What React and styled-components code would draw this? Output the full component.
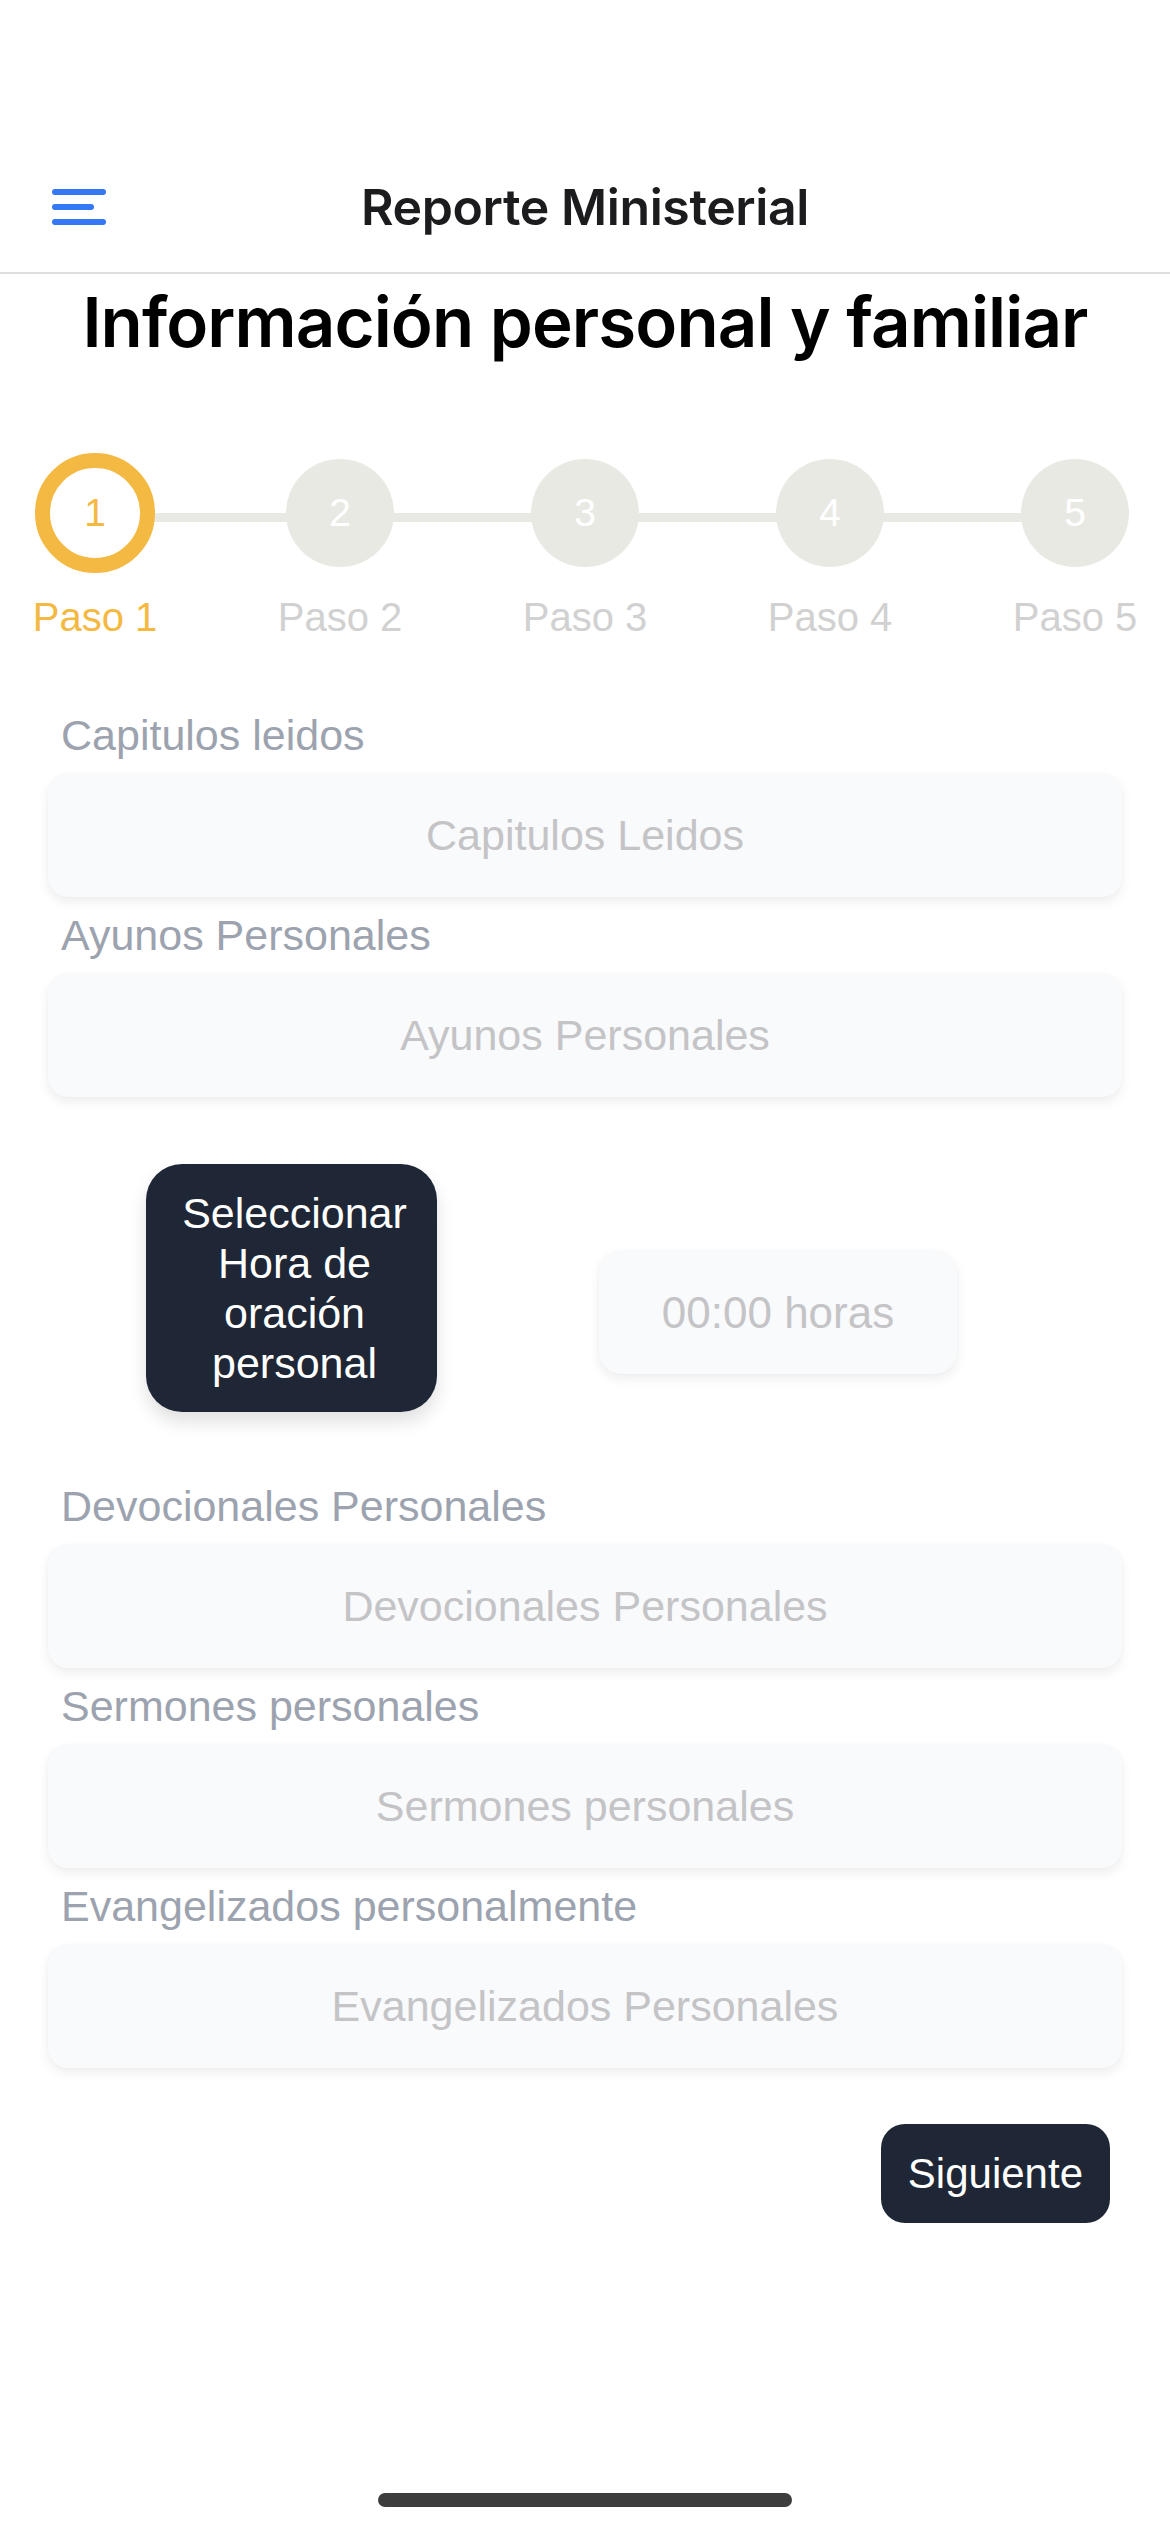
import styled, { createGlobalStyle } from "styled-components";

const GlobalStyle = createGlobalStyle`
  * {
    box-sizing: border-box;
  }
  body {
    margin: 0;
    background: #ffffff;
    font-family: "Liberation Sans", Arial, sans-serif;
  }
`;

const steps = [1, 2, 3, 4, 5];

const topFields = [
  { label: "Capitulos leidos", placeholder: "Capitulos Leidos" },
  { label: "Ayunos Personales", placeholder: "Ayunos Personales" },
];

const bottomFields = [
  { label: "Devocionales Personales", placeholder: "Devocionales Personales" },
  { label: "Sermones personales", placeholder: "Sermones personales" },
  { label: "Evangelizados personalmente", placeholder: "Evangelizados Personales" },
];

function MenuIcon() {
  return (
    <svg width="54" height="36" viewBox="0 0 54 36" fill="none">
      <g stroke="#3478f6" strokeWidth="6" strokeLinecap="round">
        <line x1="3" y1="3" x2="51" y2="3" />
        <line x1="3" y1="18" x2="39" y2="18" />
        <line x1="3" y1="33" x2="51" y2="33" />
      </g>
    </svg>
  );
}

function Field({ label, placeholder }) {
  return (
    <FieldGroup>
      <FieldLabel>{label}</FieldLabel>
      <FieldInput placeholder={placeholder} />
    </FieldGroup>
  );
}

export default function App() {
  const current = 1;

  return (
    <Page>
      <GlobalStyle />
      <StatusBar />
      <Header>
        <MenuButton>
          <MenuIcon />
        </MenuButton>
        <HeaderTitle>Reporte Ministerial</HeaderTitle>
        <span />
      </Header>

      <PageTitle>Información personal y familiar</PageTitle>

      <Stepper>
        <StepTrack />
        {steps.map((n) => (
          <Step key={n}>
            <CircleSlot>
              <StepCircle $active={n === current}>{n}</StepCircle>
            </CircleSlot>
            <StepLabel $active={n === current}>Paso {n}</StepLabel>
          </Step>
        ))}
      </Stepper>

      <Form>
        {topFields.map((f) => (
          <Field key={f.label} {...f} />
        ))}

        <TimeRow>
          <DarkButton>Seleccionar Hora de oración personal</DarkButton>
          <TimeBox>00:00 horas</TimeBox>
        </TimeRow>

        {bottomFields.map((f) => (
          <Field key={f.label} {...f} />
        ))}

        <Actions>
          <NextButton>Siguiente</NextButton>
        </Actions>
      </Form>

      <HomeIndicator />
    </Page>
  );
}

// page
const Page = styled.div`
  min-height: 100vh;
  display: flex;
  flex-direction: column;
  background: #ffffff;
`;

const StatusBar = styled.div`
  height: 141px;
`;

// header
const Header = styled.header`
  height: 133px;
  display: grid;
  grid-template-columns: 1fr auto 1fr;
  align-items: center;
  padding: 0 52px;
  border-bottom: 2px solid #dedede;
`;

const MenuButton = styled.div`
  display: flex;
  align-items: center;
`;

const HeaderTitle = styled.div`
  font-family: "Inter", "Liberation Sans", sans-serif;
  font-weight: 600;
  font-size: 50px;
  color: #1c1c1e;
  letter-spacing: -0.4px;
`;

// title
const PageTitle = styled.h1`
  margin: 6px 0 0;
  text-align: center;
  font-family: "Inter", "Liberation Sans", sans-serif;
  font-weight: 600;
  font-size: 69px;
  line-height: 84px;
  color: #000000;
  letter-spacing: -0.9px;
`;

// stepper
const Stepper = styled.div`
  position: relative;
  margin-top: 89px;
  padding: 0 35px;
  display: flex;
  justify-content: space-between;
`;

const StepTrack = styled.div`
  position: absolute;
  left: 95px;
  right: 95px;
  top: 60px;
  height: 9px;
  background: #e9e9e4;
`;

const Step = styled.div`
  position: relative;
  z-index: 1;
  width: 120px;
  display: flex;
  flex-direction: column;
  align-items: center;
`;

const CircleSlot = styled.div`
  width: 120px;
  height: 120px;
  display: flex;
  align-items: center;
  justify-content: center;
`;

const StepCircle = styled.div`
  width: ${(p) => (p.$active ? "120px" : "108px")};
  height: ${(p) => (p.$active ? "120px" : "108px")};
  border-radius: 50%;
  display: flex;
  align-items: center;
  justify-content: center;
  font-size: 39px;
  color: ${(p) => (p.$active ? "#f4b942" : "#ffffff")};
  background: ${(p) => (p.$active ? "#ffffff" : "#e9e9e4")};
  border: ${(p) => (p.$active ? "15px solid #f4b942" : "none")};
`;

const StepLabel = styled.div`
  margin-top: 21px;
  font-size: 40px;
  line-height: 46px;
  white-space: nowrap;
  color: ${(p) => (p.$active ? "#f4b942" : "#d1d1d1")};
`;

// form
const Form = styled.div`
  margin-top: 57px;
  padding: 0 48px;
  display: flex;
  flex-direction: column;
`;

const FieldGroup = styled.div`
  margin-top: 13px;
  display: flex;
  flex-direction: column;
`;

const FieldLabel = styled.label`
  padding-left: 13px;
  font-size: 43px;
  line-height: 50px;
  color: #9ca3af;
`;

const FieldInput = styled.input`
  margin-top: 14px;
  height: 123px;
  width: 100%;
  border: none;
  outline: none;
  border-radius: 20px;
  background: #f9fafb;
  box-shadow: 0 5px 12px rgba(0, 0, 0, 0.07), 0 0 3px rgba(0, 0, 0, 0.03);
  font-family: "Liberation Sans", Arial, sans-serif;
  font-size: 43px;
  text-align: center;
  color: #333333;

  &::placeholder {
    color: #c4c4c7;
  }
`;

const TimeRow = styled.div`
  margin: 67px 0 56px;
  padding-left: 98px;
  display: flex;
  align-items: flex-start;
  gap: 162px;
`;

const DarkButton = styled.button`
  width: 291px;
  padding: 24px 24px 24px 30px;
  border: none;
  border-radius: 36px;
  background: #1f2736;
  color: #ffffff;
  font-family: "Liberation Sans", Arial, sans-serif;
  font-size: 43px;
  line-height: 50px;
  text-align: center;
  box-shadow: 0 10px 18px rgba(0, 0, 0, 0.12);
`;

const TimeBox = styled.div`
  margin-top: 87px;
  width: 358px;
  height: 123px;
  border-radius: 22px;
  background: #f9fafb;
  box-shadow: 0 5px 12px rgba(0, 0, 0, 0.07), 0 0 3px rgba(0, 0, 0, 0.03);
  display: flex;
  align-items: center;
  justify-content: center;
  font-size: 44px;
  color: #c4c4c7;
`;

const Actions = styled.div`
  margin-top: 56px;
  padding-right: 12px;
  display: flex;
  justify-content: flex-end;
`;

const NextButton = styled.button`
  height: 99px;
  padding: 0 27px;
  border: none;
  border-radius: 24px;
  background: #1f2736;
  color: #ffffff;
  font-family: "Liberation Sans", Arial, sans-serif;
  font-size: 42px;
`;

// home indicator
const HomeIndicator = styled.div`
  margin: auto auto 25px;
  width: 414px;
  height: 14px;
  border-radius: 7px;
  background: #3d3d3d;
`;
